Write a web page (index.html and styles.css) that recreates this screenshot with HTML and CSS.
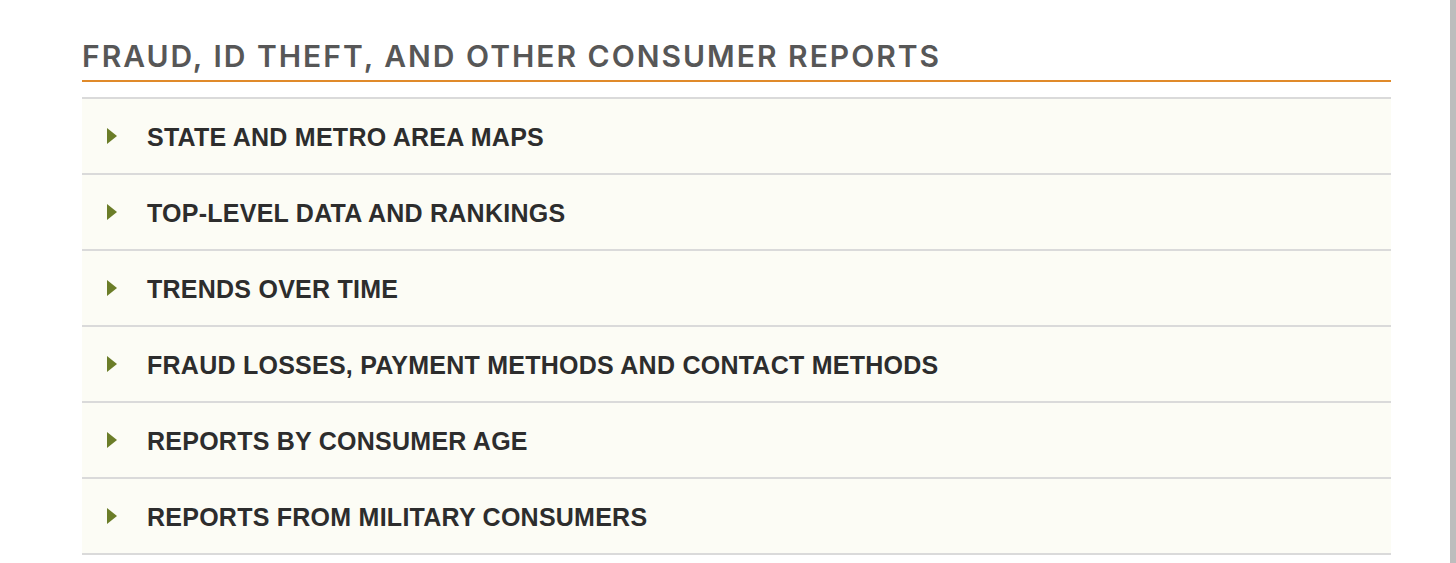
FILE: index.html
```html
<!DOCTYPE html>
<html>
<head>
<meta charset="utf-8">
<link rel="stylesheet" href="styles.css">
</head>
<body>
<div class="page">
  <section class="reports">
    <h2 class="title">FRAUD, ID THEFT, AND OTHER CONSUMER REPORTS</h2>
    <ul class="accordion">
      <li class="item"><span class="arrow"></span><span class="label">STATE AND METRO AREA MAPS</span></li>
      <li class="item"><span class="arrow"></span><span class="label">TOP-LEVEL DATA AND RANKINGS</span></li>
      <li class="item"><span class="arrow"></span><span class="label">TRENDS OVER TIME</span></li>
      <li class="item"><span class="arrow"></span><span class="label">FRAUD LOSSES, PAYMENT METHODS AND CONTACT METHODS</span></li>
      <li class="item"><span class="arrow"></span><span class="label">REPORTS BY CONSUMER AGE</span></li>
      <li class="item"><span class="arrow"></span><span class="label">REPORTS FROM MILITARY CONSUMERS</span></li>
    </ul>
  </section>
  <div class="edge"></div>
</div>
</body>
</html>
```
FILE: styles.css
```css
html, body {
  margin: 0;
  padding: 0;
  background: #fff;
  height: 100%;
  overflow: hidden;
}
.page {
  display: flex;
  height: 563px;
}
.reports {
  margin-left: 82px;
  width: 1309px;
  padding-top: 38px;
}
.edge {
  margin-left: auto;
  width: 6px;
  background: #bdbdbd;
}
.title {
  margin: 0;
  font-family: "Inter", "Open Sans", sans-serif;
  font-weight: 600;
  font-size: 30px;
  line-height: 36px;
  letter-spacing: 2px;
  color: #575757;
  padding-bottom: 6px;
  border-bottom: 2px solid #e08a2a;
}
.accordion {
  list-style: none;
  margin: 15px 0 0;
  padding: 0;
  border-top: 2px solid #dadada;
}
.item {
  display: flex;
  align-items: center;
  height: 74px;
  background: #fcfcf5;
  border-bottom: 2px solid #dadada;
}
.arrow {
  width: 0;
  height: 0;
  margin-left: 25px;
  border-top: 8px solid transparent;
  border-bottom: 8px solid transparent;
  border-left: 10px solid #6b7d28;
}
.label {
  margin-left: 30px;
  padding-top: 2px;
  font-family: "Liberation Sans", Arial, sans-serif;
  font-weight: 700;
  font-size: 25px;
  letter-spacing: 0.25px;
  color: #2d2d2d;
}
```
